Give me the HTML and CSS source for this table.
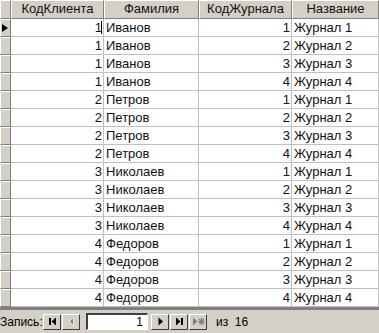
FILE: index.html
```html
<!DOCTYPE html>
<html>
<head>
<meta charset="utf-8">
<link rel="stylesheet" href="styles.css">
</head>
<body>
<div class="sheet">
  <div class="grid" id="grid">
    <div class="hd sel"></div>
    <div class="hd">КодКлиента</div>
    <div class="hd">Фамилия</div>
    <div class="hd">КодЖурнала</div>
    <div class="hd">Название</div>
  </div>
  <div class="nav">
    <span class="lbl">Запись:</span>
    <span class="btn"><svg width="9" height="9" viewBox="0 0 9 9"><rect x="1" y="1" width="2" height="7" fill="#000"/><path d="M8 0.5 L3.5 4.5 L8 8.5Z" fill="#000"/></svg></span>
    <span class="btn"><svg width="9" height="9" viewBox="0 0 9 9"><path d="M6.5 0.5 L2 4.5 L6.5 8.5Z" fill="#fff"/><path d="M6 1.5 L2.8 4.5 L6 7.5Z" fill="#808080"/></svg></span>
    <span class="field">1</span>
    <span class="btn"><svg width="9" height="9" viewBox="0 0 9 9"><path d="M2.5 0.5 L7 4.5 L2.5 8.5Z" fill="#000"/></svg></span>
    <span class="btn"><svg width="9" height="9" viewBox="0 0 9 9"><path d="M1 0.5 L5.5 4.5 L1 8.5Z" fill="#000"/><rect x="6" y="1" width="2" height="7" fill="#000"/></svg></span>
    <span class="btn"><svg width="13" height="9" viewBox="0 0 13 9"><path d="M1 0.5 L5.5 4.5 L1 8.5Z" fill="#808080"/><path d="M9.5 1v7M6 4.5h7M7 2l5 5M12 2l-5 5" stroke="#808080" stroke-width="1.2"/></svg></span>
    <span class="of">из&nbsp; 16</span>
  </div>
</div>
<script>
var data=[[1,"Иванов",1],[1,"Иванов",2],[1,"Иванов",3],[1,"Иванов",4],[2,"Петров",1],[2,"Петров",2],[2,"Петров",3],[2,"Петров",4],[3,"Николаев",1],[3,"Николаев",2],[3,"Николаев",3],[3,"Николаев",4],[4,"Федоров",1],[4,"Федоров",2],[4,"Федоров",3],[4,"Федоров",4]];
var g=document.getElementById('grid');
data.forEach(function(r,i){
  var s=document.createElement('div');s.className='c sel'+(i==0?' cur':'');g.appendChild(s);
  var a=document.createElement('div');a.className='c num'+(i==0?' edit':'');a.textContent=r[0];g.appendChild(a);
  var b=document.createElement('div');b.className='c';b.textContent=r[1];g.appendChild(b);
  var c=document.createElement('div');c.className='c num';c.textContent=r[2];g.appendChild(c);
  var d=document.createElement('div');d.className='c';d.textContent='Журнал '+r[2];g.appendChild(d);
});
</script>
</body>
</html>
```
FILE: styles.css
```css
html,body{margin:0;padding:0;background:#fff;}
body{width:379px;height:333px;overflow:hidden;font-family:"Liberation Sans",Arial,sans-serif;font-size:13px;color:#000;}
.sheet{width:379px;height:333px;display:flex;flex-direction:column;background:#d4d0c8;}
.grid{display:grid;grid-template-columns:11px 93px 95px 93px 87px;grid-template-rows:19px repeat(16,18px);background:#fff;width:379px;}
.hd{background:#d4d0c8;border-top:1px solid #fff;border-left:1px solid #fff;border-right:1px solid #808080;border-bottom:1px solid #808080;box-sizing:border-box;text-align:center;line-height:16px;white-space:nowrap;overflow:hidden;color:#111;}
.c{box-sizing:border-box;border-right:1px solid #c0c0c0;border-bottom:1px solid #c0c0c0;line-height:17px;padding:0 2px;white-space:nowrap;overflow:hidden;color:#111;}
.c.num{text-align:right;padding-right:1px;}
.c.sel{background:#d4d0c8;border-left:1px solid #fff;border-top:1px solid #fff;border-right:1px solid #808080;border-bottom:1px solid #808080;padding:0;position:relative;}
.c.cur::after{content:"";position:absolute;left:1px;top:4px;border-left:6px solid #000;border-top:4px solid transparent;border-bottom:4px solid transparent;}
.c.edit{position:relative;}
.c.edit::after{content:"";position:absolute;right:1px;top:2px;width:1px;height:13px;background:#000;}
.nav{flex:1;display:flex;align-items:center;border-top:3px solid #808080;}
.lbl{width:43px;font-size:12px;}
.btn{width:18px;height:16px;box-sizing:border-box;border-top:1px solid #fff;border-left:1px solid #fff;border-right:1px solid #404040;border-bottom:1px solid #404040;display:flex;align-items:center;justify-content:center;background:#d4d0c8;margin-right:1px;}
.field{width:62px;height:17px;box-sizing:border-box;background:#fff;border-top:2px solid #404040;border-left:2px solid #404040;border-right:1px solid #fff;border-bottom:1px solid #fff;text-align:right;padding-right:4px;line-height:14px;margin:0 3px 0 5px;font-size:12px;}
.of{margin-left:8px;font-size:12px;}
```
